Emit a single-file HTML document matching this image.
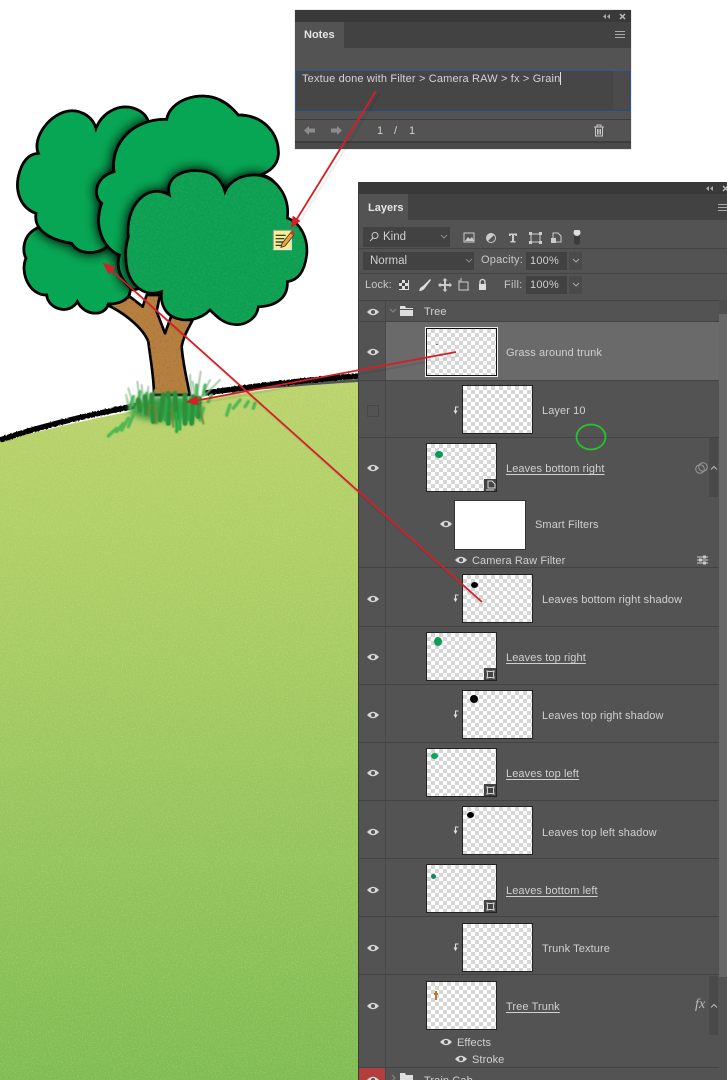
<!DOCTYPE html>
<html><head><meta charset="utf-8">
<style>
html,body{margin:0;padding:0;width:727px;height:1080px;overflow:hidden;background:#fff}
body{position:relative;font-family:"Liberation Sans",sans-serif;font-size:11px;letter-spacing:.1px;color:#d0d0d0}
#art{position:absolute;left:0;top:0}
.a{position:absolute}
.t{position:absolute;white-space:nowrap;line-height:14px}
.u{text-decoration:underline;text-underline-offset:2px}
.th{position:absolute;width:69px;height:47px;border:1px solid #222;background:repeating-conic-gradient(#d6d6d6 0 25%,#fff 0 50%) 0 0/8px 8px}
.line{position:absolute;left:359px;right:0;height:1px;background:#434343}
.eye{position:absolute;width:12px;height:8px}
.dd{position:absolute;background:#424242}
</style></head><body>
<svg id="art" width="727" height="1080" viewBox="0 0 727 1080">
<defs>
<linearGradient id="g" x1="0" y1="380" x2="0" y2="1080" gradientUnits="userSpaceOnUse">
<stop offset="0" stop-color="#bad36c"/><stop offset=".35" stop-color="#a9cc64"/><stop offset=".7" stop-color="#93c35b"/><stop offset="1" stop-color="#7fbc52"/></linearGradient>
<filter id="n" x="0" y="0" width="100%" height="100%"><feTurbulence type="fractalNoise" baseFrequency=".8" numOctaves="2" seed="4"/><feColorMatrix values="0 0 0 0 1 0 0 0 0 1 0 0 0 0 .7 0 0 0 3 -1.45"/><feComposite in2="SourceAlpha" operator="in"/></filter>
<filter id="ln" x="0" y="0" width="100%" height="100%"><feTurbulence type="fractalNoise" baseFrequency=".28" numOctaves="2" seed="8"/><feColorMatrix values="0 0 0 0 .3 0 0 0 0 .75 0 0 0 0 .45 0 0 0 2.500 -1.300"/><feGaussianBlur stdDeviation="1.500"/><feComposite in2="SourceAlpha" operator="in"/></filter>
<filter id="bn" x="0" y="0" width="100%" height="100%"><feTurbulence type="fractalNoise" baseFrequency=".15" numOctaves="3" seed="3"/><feColorMatrix values="0 0 0 0 .3 0 0 0 0 .17 0 0 0 0 .05 0 0 0 4 -2.300"/><feComposite in2="SourceAlpha" operator="in"/></filter>
<filter id="b" x="-25%" y="-25%" width="150%" height="150%"><feGaussianBlur stdDeviation="20"/><feComponentTransfer><feFuncA type="linear" slope="1.350"/></feComponentTransfer></filter>
<filter id="gb" x="-10%" y="-10%" width="120%" height="120%"><feGaussianBlur stdDeviation="1.600"/></filter>
<filter id="gb2" x="-30%" y="-30%" width="160%" height="160%"><feGaussianBlur stdDeviation="10"/></filter>
<filter id="rough" x="-5%" y="-20%" width="110%" height="140%"><feTurbulence type="fractalNoise" baseFrequency=".5" numOctaves="1" seed="2"/><feDisplacementMap in="SourceGraphic" scale="2"/></filter>
<path id="front" d="M675 335C690 300 730 283 770 285C830 290 870 350 862 414C905 430 925 480 920 525C915 565 900 600 862 605C865 650 830 680 775 680C770 720 730 738 700 733C670 730 650 710 630 690C600 720 560 725 530 715C495 705 480 670 485 635C430 655 380 610 378 540C375 510 380 490 385 470C375 380 440 305 508 345C495 290 550 270 590 272C640 272 665 300 675 335Z"/>
<path id="mid" d="M500 118C510 60 600 30 660 60C685 72 700 88 715 105C790 105 838 160 835 225C832 255 810 275 780 285C825 290 845 330 840 380L700 560L400 630C370 610 345 570 358 525C310 505 280 440 305 370C280 350 280 295 342 275C330 190 400 115 500 118Z"/>
<path id="tl" d="M288 145C305 100 350 75 390 82C420 88 440 105 445 125L480 350L320 500C300 520 240 530 215 490C150 480 100 450 108 400C65 385 45 340 55 290C65 245 85 222 115 220C95 175 150 95 215 92C250 92 280 115 288 145Z"/>
<path id="bl" d="M110 445C70 465 65 510 78 535C60 575 85 645 140 645C145 690 210 705 232 665C255 710 315 710 325 672C350 672 375 665 388 645L420 500L300 440L140 430Z"/>
<clipPath id="cbl"><use href="#bl"/></clipPath>
<clipPath id="ctl"><use href="#tl"/></clipPath>
<clipPath id="cmid"><use href="#mid"/></clipPath>
</defs>
<!-- ground -->
<path d="M0 442Q140 402 358 379L358 1080L0 1080Z" fill="url(#g)"/>
<path d="M0 442Q140 402 358 379L358 1080L0 1080Z" fill="#fff" filter="url(#n)" opacity=".2"/>
<path d="M216 391Q290 383 358 379" stroke="#555" stroke-width="3" fill="none" transform="translate(0 1.500)"/>
<path d="M0 440Q60 420 140 405M205 393Q290 381 358 376" stroke="#000" stroke-width="5.500" fill="none" filter="url(#rough)"/>
<g transform="translate(0 80) scale(.33333)">
<!-- trunk -->
<path d="M322 675C375 700 430 745 445 785C450 830 462 890 462 945L570 945C560 900 548 840 545 800C550 770 565 745 577 722L515 705L495 760L470 695L480 645L440 645L428 680L390 650Z" fill="#b67f3f" stroke="#000" stroke-width="8" stroke-linejoin="round"/>
<path d="M322 675C375 700 430 745 445 785C450 830 462 890 462 945L570 945C560 900 548 840 545 800C550 770 565 745 577 722L515 705L495 760L470 695L480 645L440 645L428 680L390 650Z" filter="url(#bn)" opacity=".7"/>
<!-- bottom left -->
<use href="#bl" fill="#07a654" stroke="#000" stroke-width="8"/>
<g clip-path="url(#cbl)"><use href="#tl" filter="url(#b)"/><use href="#mid" filter="url(#b)"/></g>
<use href="#bl" fill="none" stroke="#000" stroke-width="8"/>
<!-- top left -->
<use href="#tl" fill="#07a654" stroke="#000" stroke-width="8"/>
<g clip-path="url(#ctl)"><use href="#mid" filter="url(#b)"/></g>
<use href="#tl" fill="none" stroke="#000" stroke-width="8"/>
<!-- middle -->
<use href="#mid" fill="#07a654" stroke="#000" stroke-width="8"/>
<g clip-path="url(#cmid)"><use href="#front" filter="url(#b)"/></g>
<use href="#mid" fill="none" stroke="#000" stroke-width="8"/>
<!-- front -->
<use href="#front" fill="#0b9e50"/>
<use href="#front" filter="url(#ln)" opacity=".4"/>
<use href="#front" fill="none" stroke="#000" stroke-width="8"/>
<!-- grass -->
<ellipse cx="495" cy="985" rx="110" ry="38" fill="#3d9a42" filter="url(#gb2)"/>
<g fill="none" stroke-linecap="round" filter="url(#gb)">
<g stroke="#8fbb90" stroke-width="6" opacity=".75">
<path d="M400 975L385 925"/><path d="M420 970L412 905"/><path d="M440 970L445 920"/><path d="M385 975L378 945"/><path d="M430 965L425 915"/><path d="M575 955L570 885"/><path d="M590 955L602 875"/><path d="M605 950L630 900"/><path d="M615 945L660 900"/><path d="M585 950L578 905"/><path d="M455 960L465 930"/>
</g>
<g stroke="#45b552" stroke-width="10" opacity=".9">
<path d="M390 985L400 950"/><path d="M410 990L420 935"/><path d="M430 1000L440 940"/><path d="M370 1030L350 1055"/><path d="M385 1015L365 1050"/><path d="M400 1005L385 1040"/><path d="M350 1045L325 1068"/><path d="M680 1005L690 975"/><path d="M700 985L720 960"/><path d="M735 980L745 965"/><path d="M760 985L765 970"/><path d="M590 960L590 915"/><path d="M610 945L615 915"/><path d="M625 965L635 945"/><path d="M530 1055L535 990"/><path d="M600 1020L610 985"/>
</g>
<g stroke="#2f8f3b" stroke-width="15">
<path d="M440 1000L435 950"/><path d="M460 1025L455 945"/><path d="M480 1020L490 945"/><path d="M505 1030L505 940"/><path d="M530 1015L525 940"/><path d="M555 1030L555 945"/><path d="M575 1030L580 950"/><path d="M420 990L415 960"/><path d="M595 1010L598 955"/>
</g>
<g stroke="#6a8a35" stroke-width="7" opacity=".85"><path d="M470 1030L465 975"/><path d="M520 1040L515 990"/><path d="M610 1030L600 985"/><path d="M445 1005L450 975"/></g>
<g stroke="#25aa46" stroke-width="8"><path d="M495 1020L500 960"/><path d="M540 1048L540 960"/><path d="M565 1020L570 955"/><path d="M585 1005L590 960"/><path d="M530 1055L528 1000"/></g>
</g>
<!-- note icon -->
<rect x="820" y="451" width="54" height="58" fill="#f7ee8e" stroke="#999" stroke-width="3"/>
<path d="M820 509H874V475" fill="none" stroke="#eee" stroke-width="3"/>
<path d="M827 466h30M827 476h26M827 486h24M827 496h28" stroke="#222" stroke-width="3.500"/>
<path d="M846 490L872 458L881 466L855 498L843 502Z" fill="#e8a538" stroke="#333" stroke-width="2.500"/>
<path d="M870 458L876 451L885 459L879 466Z" fill="#c33"/>
</g>
</svg>

<!-- Notes panel -->
<div class="a" style="left:295px;top:10px;width:336px;height:139px;background:#535353;box-shadow:0 0 1px #999"></div>
<div class="a" style="left:295px;top:10px;width:336px;height:12px;background:#393939"></div>
<div class="a" style="left:295px;top:22px;width:336px;height:26px;background:#424242"></div>
<div class="a" style="left:295px;top:22px;width:49px;height:26px;background:#535353"></div>
<div class="t" style="left:304px;top:28px;color:#e6e6e6;font-weight:bold;letter-spacing:0">Notes</div>
<svg class="a" style="left:602px;top:13px" width="26" height="8"><path d="M4 1L1 3.500L4 6ZM8 1L5 3.500L8 6Z" fill="#aaa"/><path d="M18 1L23 6M23 1L18 6" stroke="#bbb" stroke-width="1.500"/></svg>
<div class="a" style="left:615px;top:31px;width:10px;height:7px;background:repeating-linear-gradient(#aaa 0 1px,transparent 1px 3px)"></div>
<div class="a" style="left:295px;top:70px;width:334px;height:40px;background:#464646;border:1px solid #2c5a94"></div>
<div class="a" style="left:613px;top:71px;width:16px;height:39px;background:#4b4b4b"></div>
<div class="t" style="left:302px;top:72px;letter-spacing:.16px;color:#d4d4d4">Textue done with Filter &gt; Camera RAW &gt; fx &gt; Grain</div>
<div class="a" style="left:560px;top:72px;width:1px;height:13px;background:#ddd"></div>
<div class="a" style="left:295px;top:119px;width:336px;height:1px;background:#3d3d3d"></div>
<div class="a" style="left:295px;top:141px;width:336px;height:2px;background:#3d3d3d"></div>
<div class="a" style="left:295px;top:143px;width:336px;height:6px;background:#4a4a4a"></div>
<svg class="a" style="left:303px;top:124px" width="40" height="13"><path d="M1 6.500L6 2V4.500H12V8.500H6V11Z M39 6.500L34 2V4.500H28V8.500H34V11Z" fill="#8c8c8c"/></svg>
<div class="t" style="left:377px;top:124px;color:#cfcfcf;letter-spacing:0">1</div>
<div class="t" style="left:394px;top:124px;color:#cfcfcf;letter-spacing:0">/</div>
<div class="t" style="left:409px;top:124px;color:#cfcfcf;letter-spacing:0">1</div>
<svg class="a" style="left:593px;top:124px" width="12" height="13"><path d="M1 3H11M4 3V1H8V3M2.500 3.500V12H9.500V3.500M4.500 5V10.500M6 5V10.500M7.500 5V10.500" fill="none" stroke="#c8c8c8" stroke-width="1"/></svg>

<!-- Layers panel -->
<div class="a" style="left:359px;top:182px;width:368px;height:898px;background:#535353;box-shadow:-1px 0 0 #3a3a3a"></div>
<div class="a" style="left:359px;top:182px;width:368px;height:12px;background:#393939"></div>
<div class="a" style="left:359px;top:194px;width:368px;height:26px;background:#424242"></div>
<div class="a" style="left:359px;top:194px;width:49px;height:26px;background:#535353"></div>
<div class="t" style="left:368px;top:201px;color:#e6e6e6;font-weight:bold;letter-spacing:0">Layers</div>
<svg class="a" style="left:705px;top:185px" width="22" height="8"><path d="M4 1L1 3.500L4 6ZM8 1L5 3.500L8 6Z" fill="#aaa"/><path d="M18 1L23 6M23 1L18 6" stroke="#bbb" stroke-width="1.500"/></svg>
<div class="a" style="left:718px;top:204px;width:9px;height:7px;background:repeating-linear-gradient(#aaa 0 1px,transparent 1px 3px)"></div>
<div class="line" style="top:248px"></div><div class="line" style="top:273px"></div><div class="line" style="top:300px"></div>

<!-- filter row -->
<div class="dd" style="left:363px;top:227px;width:87px;height:20px"></div>
<svg class="a" style="left:369px;top:231px" width="10" height="11"><circle cx="6" cy="4.500" r="3" fill="none" stroke="#ccc"/><path d="M4 7L1 10" stroke="#ccc"/></svg>
<div class="t" style="left:383px;top:230px;font-size:11.500px;letter-spacing:0">Kind</div>
<svg class="a" style="left:440px;top:234px" width="8" height="6"><path d="M1 1L4 4L7 1" fill="none" stroke="#888"/></svg>
<svg class="a" style="left:463px;top:230px" width="118" height="16" viewBox="0 0 118 16">
<rect x="1" y="3" width="10" height="9" fill="none" stroke="#ccc"/><path d="M2 11L5 7L7 9L9 7L11 11Z" fill="#ccc"/>
<circle cx="28" cy="8" r="4.500" fill="#555" stroke="#ccc"/><path d="M28 3.500A4.500 4.500 0 0 0 28 12.500Z" transform="rotate(45 28 8)" fill="#ccc"/>
<path d="M46 3.500H54V6H52.500L52 5H51V11H52.500V12.500H47.500V11H49V5H48L47.500 6H46Z" fill="#ccc"/>
<rect x="68" y="4" width="9" height="8" fill="none" stroke="#ccc"/><path d="M66 2h3v3h-3zM76 2h3v3h-3zM66 11h3v3h-3zM76 11h3v3h-3z" fill="#ccc"/>
<path d="M90 3H95L98 6V12H90Z" fill="none" stroke="#ccc"/><rect x="88" y="8" width="5" height="5" fill="#ccc"/>
<rect x="111" y="3" width="6" height="12" rx="3" fill="#3c3c3c"/><circle cx="114" cy="2.500" r="3.500" fill="#ddd"/>
</svg>

<!-- blend row -->
<div class="dd" style="left:363px;top:252px;width:111px;height:18px"></div>
<div class="t" style="left:370px;top:254px;font-size:11.500px;letter-spacing:0">Normal</div>
<svg class="a" style="left:465px;top:258px" width="8" height="6"><path d="M1 1L4 4L7 1" fill="none" stroke="#888"/></svg>
<div class="t" style="left:481px;top:253px;letter-spacing:.2px;color:#c8c8c8">Opacity:</div>
<div class="dd" style="left:526px;top:252px;width:41px;height:18px"></div>
<div class="t" style="left:530px;top:254px;letter-spacing:.2px">100%</div>
<div class="dd" style="left:569px;top:252px;width:13px;height:18px;background:#4a4a4a"></div>
<svg class="a" style="left:572px;top:258px" width="8" height="6"><path d="M1 1L4 4L7 1" fill="none" stroke="#aaa"/></svg>

<!-- lock row -->
<div class="t" style="left:365px;top:278px;color:#c8c8c8">Lock:</div>
<svg class="a" style="left:398px;top:277px" width="92" height="16" viewBox="0 0 92 16">
<rect x="1" y="3" width="10" height="10" fill="#ddd"/><path d="M1 3h3v3h-3zM7 3h3v3h-3zM4 6h3v3h-3zM1 9h3v3h-3zM7 9h3v3h-3z" fill="#444"/>
<path d="M21 14Q22 10 25 9L32 2L33 3L27 11Q25 14 21 14Z" fill="#ddd"/>
<path d="M47 1L49.500 3.500H48V7H51.500V5.500L54 8L51.500 10.500V9H48V12.500H49.500L47 15L44.500 12.500H46V9H42.500V10.500L40 8L42.500 5.500V7H46V3.500H44.500Z" fill="#ccc"/>
<path d="M61 5H70V13H63M61 3V13H71M63 1V5" fill="none" stroke="#ccc"/>
<path d="M82 7V5A2.500 2.500 0 0 1 87 5V7" fill="none" stroke="#ddd" stroke-width="1.300"/><rect x="81" y="7" width="7" height="6" fill="#ddd"/>
</svg>
<div class="t" style="left:504px;top:278px;letter-spacing:.3px;color:#c8c8c8">Fill:</div>
<div class="dd" style="left:526px;top:276px;width:41px;height:18px"></div>
<div class="t" style="left:530px;top:278px;letter-spacing:.2px">100%</div>
<div class="dd" style="left:569px;top:276px;width:13px;height:18px;background:#4a4a4a"></div>
<svg class="a" style="left:572px;top:282px" width="8" height="6"><path d="M1 1L4 4L7 1" fill="none" stroke="#aaa"/></svg>

<!-- list structure -->
<div class="a" style="left:386px;top:322px;width:333px;height:59px;background:#6a6a6a"></div>
<div class="a" style="left:385px;top:301px;width:1px;height:779px;background:#474747"></div>
<div class="a" style="left:719px;top:300px;width:8px;height:677px;background:#676767"></div>
<div class="a" style="left:719px;top:300px;width:8px;height:14px;background:#4f4f4f"></div>
<div class="a" style="left:719px;top:977px;width:8px;height:103px;background:#535353"></div>
<div class="a" style="left:709px;top:438px;width:9px;height:59px;background:#494949"></div>
<div class="a" style="left:709px;top:976px;width:9px;height:59px;background:#494949"></div>
<div class="line" style="top:321px;right:8px"></div>
<div class="line" style="top:380px;right:8px"></div>
<div class="line" style="top:437px;right:8px"></div>
<div class="line" style="top:567px;right:8px"></div>
<div class="line" style="top:626px;right:8px"></div>
<div class="line" style="top:684px;right:8px"></div>
<div class="line" style="top:742px;right:8px"></div>
<div class="line" style="top:800px;right:8px"></div>
<div class="line" style="top:858px;right:8px"></div>
<div class="line" style="top:916px;right:8px"></div>
<div class="line" style="top:974px;right:8px"></div>
<div class="line" style="top:1067px;right:8px"></div>

<!-- eyes -->
<svg width="0" height="0" style="position:absolute"><defs><g id="e"><path d="M0 4Q6 -2.500 12 4Q6 10.500 0 4Z" fill="#d8d8d8"/><circle cx="6" cy="4" r="2" fill="#555"/></g></defs></svg>
<svg class="eye" style="left:367px;top:308px"><use href="#e"/></svg>
<svg class="eye" style="left:367px;top:348px"><use href="#e"/></svg>
<svg class="eye" style="left:367px;top:464px"><use href="#e"/></svg>
<svg class="eye" style="left:440px;top:520px"><use href="#e"/></svg>
<svg class="eye" style="left:455px;top:556px"><use href="#e"/></svg>
<svg class="eye" style="left:367px;top:595px"><use href="#e"/></svg>
<svg class="eye" style="left:367px;top:653px"><use href="#e"/></svg>
<svg class="eye" style="left:367px;top:711px"><use href="#e"/></svg>
<svg class="eye" style="left:367px;top:769px"><use href="#e"/></svg>
<svg class="eye" style="left:367px;top:828px"><use href="#e"/></svg>
<svg class="eye" style="left:367px;top:886px"><use href="#e"/></svg>
<svg class="eye" style="left:367px;top:944px"><use href="#e"/></svg>
<svg class="eye" style="left:367px;top:1002px"><use href="#e"/></svg>
<svg class="eye" style="left:440px;top:1038px"><use href="#e"/></svg>
<svg class="eye" style="left:455px;top:1055px"><use href="#e"/></svg>
<div class="a" style="left:367px;top:405px;width:10px;height:10px;border:1px solid #474747"></div>

<!-- group row -->
<svg class="a" style="left:389px;top:308px" width="8" height="6"><path d="M1 1L4 4L7 1" fill="none" stroke="#888"/></svg>
<svg class="a" style="left:400px;top:306px" width="14" height="11"><path d="M0 0H5L6 2H13V3H0Z M0 4H13V10H0Z" fill="#ddd"/></svg>
<div class="t" style="left:424px;top:305px;font-size:11px">Tree</div>

<!-- thumbs -->
<div class="th" style="left:425px;top:327px;width:69px;height:46px;border:2px solid #eee;outline:1px solid #111;outline-offset:-2px"></div>
<div class="a" style="left:436px;top:344px;width:2px;height:1px;background:#4c9a55"></div>
<div class="th" style="left:462px;top:385px"></div>
<div class="th" style="left:426px;top:443px"></div>
<div class="a" style="left:435px;top:451px;width:8px;height:7px;border-radius:50%;background:#0a9a55"></div>
<div class="a" style="left:484px;top:479px;width:12px;height:12px;background:#444"></div>
<svg class="a" style="left:485px;top:480px" width="11" height="11"><path d="M3 1H7L10 4V8H3ZM1 10H9" fill="none" stroke="#ddd"/></svg>
<div class="a" style="left:455px;top:501px;width:70px;height:48px;background:#fff;box-shadow:0 0 0 1px #333"></div>
<div class="th" style="left:462px;top:574px"></div>
<div class="a" style="left:471px;top:582px;width:7px;height:6px;border-radius:50%;background:#000"></div>
<div class="th" style="left:426px;top:632px"></div>
<div class="a" style="left:434px;top:637px;width:8px;height:9px;border-radius:50%;background:#0a9f55"></div>
<div class="a" style="left:484px;top:668px;width:12px;height:12px;background:#444"></div>
<div class="th" style="left:462px;top:690px"></div>
<div class="a" style="left:470px;top:695px;width:8px;height:8px;border-radius:50%;background:#000"></div>
<div class="th" style="left:426px;top:748px"></div>
<div class="a" style="left:431px;top:753px;width:7px;height:6px;border-radius:50%;background:#0aa455"></div>
<div class="a" style="left:484px;top:784px;width:12px;height:12px;background:#444"></div>
<div class="th" style="left:462px;top:806px"></div>
<div class="a" style="left:467px;top:812px;width:7px;height:6px;border-radius:50%;background:#000"></div>
<div class="th" style="left:426px;top:864px"></div>
<div class="a" style="left:431px;top:874px;width:5px;height:5px;border-radius:50%;background:#0a8a55"></div>
<div class="a" style="left:484px;top:900px;width:12px;height:12px;background:#444"></div>
<div class="th" style="left:462px;top:923px"></div>
<div class="th" style="left:426px;top:981px"></div>
<svg class="a" style="left:433px;top:991px" width="6" height="10"><path d="M3 0V9M1 3H5" stroke="#b57a2c" stroke-width="2"/></svg>

<!-- bound corners -->
<svg class="a" style="left:485px;top:669px" width="11" height="11"><path d="M2 2Q5.500 3 9 2Q8 5.500 9 9Q5.500 8 2 9Q3 5.500 2 2Z" fill="none" stroke="#ddd"/></svg>
<svg class="a" style="left:485px;top:785px" width="11" height="11"><path d="M2 2Q5.500 3 9 2Q8 5.500 9 9Q5.500 8 2 9Q3 5.500 2 2Z" fill="none" stroke="#ddd"/></svg>
<svg class="a" style="left:485px;top:901px" width="11" height="11"><path d="M2 2Q5.500 3 9 2Q8 5.500 9 9Q5.500 8 2 9Q3 5.500 2 2Z" fill="none" stroke="#ddd"/></svg>

<!-- clipping arrows -->
<svg width="0" height="0" style="position:absolute"><defs><path id="c" d="M5.500 1H2.500V6.500M1 4.500L2.500 7L4 4.500" fill="none" stroke="#ddd" stroke-width="1.100"/></defs></svg>
<svg class="a" style="left:453px;top:406px" width="7" height="9"><use href="#c"/></svg>
<svg class="a" style="left:453px;top:594px" width="7" height="9"><use href="#c"/></svg>
<svg class="a" style="left:453px;top:710px" width="7" height="9"><use href="#c"/></svg>
<svg class="a" style="left:453px;top:826px" width="7" height="9"><use href="#c"/></svg>
<svg class="a" style="left:453px;top:943px" width="7" height="9"><use href="#c"/></svg>

<!-- layer names -->
<div class="t" style="left:506px;top:346px">Grass around trunk</div>
<div class="t" style="left:542px;top:404px">Layer 10</div>
<div class="t u" style="left:506px;top:462px">Leaves bottom right</div>
<div class="t" style="left:535px;top:518px">Smart Filters</div>
<div class="t" style="left:472px;top:554px">Camera Raw Filter</div>
<div class="t" style="left:542px;top:593px">Leaves bottom right shadow</div>
<div class="t u" style="left:506px;top:651px">Leaves top right</div>
<div class="t" style="left:542px;top:709px">Leaves top right shadow</div>
<div class="t u" style="left:506px;top:767px">Leaves top left</div>
<div class="t" style="left:542px;top:826px">Leaves top left shadow</div>
<div class="t u" style="left:506px;top:884px">Leaves bottom left</div>
<div class="t" style="left:542px;top:942px">Trunk Texture</div>
<div class="t u" style="left:506px;top:1000px">Tree Trunk</div>
<div class="t" style="left:457px;top:1036px">Effects</div>
<div class="t" style="left:472px;top:1053px">Stroke</div>

<!-- right icons -->
<svg class="a" style="left:695px;top:462px" width="13" height="12"><circle cx="5" cy="7" r="4.300" fill="none" stroke="#999"/><circle cx="8" cy="5" r="4.300" fill="none" stroke="#999"/></svg>
<svg class="a" style="left:710px;top:465px" width="8" height="6"><path d="M1 4.500L4 1.500L7 4.500" fill="none" stroke="#bbb"/></svg>
<svg class="a" style="left:697px;top:555px" width="12" height="10"><path d="M0 2H11M0 5H11M0 8H11" stroke="#ccc"/><path d="M6 0.500h3v3h-3zM2 3.500h3v3h-3zM6 6.500h3v3h-3z" fill="#ccc"/></svg>
<div class="t" style="left:695px;top:998px;font-family:'Liberation Serif',serif;font-style:italic;font-size:14px;color:#bbb">fx</div>
<svg class="a" style="left:710px;top:1003px" width="8" height="6"><path d="M1 4.500L4 1.500L7 4.500" fill="none" stroke="#bbb"/></svg>

<!-- bottom group -->
<div class="a" style="left:359px;top:1068px;width:26px;height:12px;background:#b33e3e"></div>
<svg class="eye" style="left:367px;top:1076px"><use href="#e"/></svg>
<svg class="a" style="left:391px;top:1074px" width="6" height="8"><path d="M1 1L4 4L1 7" fill="none" stroke="#888"/></svg>
<svg class="a" style="left:400px;top:1073px" width="14" height="7"><path d="M0 0H5L6 2H13V7H0Z" fill="#ddd"/></svg>
<div class="t" style="left:424px;top:1074px">Train Cab</div>

<!-- overlay arrows -->
<svg class="a" style="left:0;top:0" width="727" height="1080" viewBox="0 0 727 1080">
<g stroke="#000" opacity=".07" fill="none" stroke-width="2"><path d="M378 92L293 228" transform="translate(2 1)"/><path d="M458 354L190 403" transform="translate(1 2)"/><path d="M484 604L106 266" transform="translate(1 2)"/></g>
<g stroke="#d51f26" fill="#d51f26" stroke-width="1.800">
<path d="M376 91L295 222" fill="none"/><path d="M291 228L293 216L300 221Z" stroke-width=".5"/>
<path d="M456 352L194 401" fill="none"/><path d="M186 402L197 396L198 405Z" stroke-width=".5"/>
<path d="M482 602L110 269" fill="none"/><path d="M103 263L115 267L109 274Z" stroke-width=".5"/>
</g>
<ellipse cx="591" cy="437" rx="14.500" ry="12.500" fill="none" stroke="#26c42b" stroke-width="1.800"/>
</svg>
</body></html>
